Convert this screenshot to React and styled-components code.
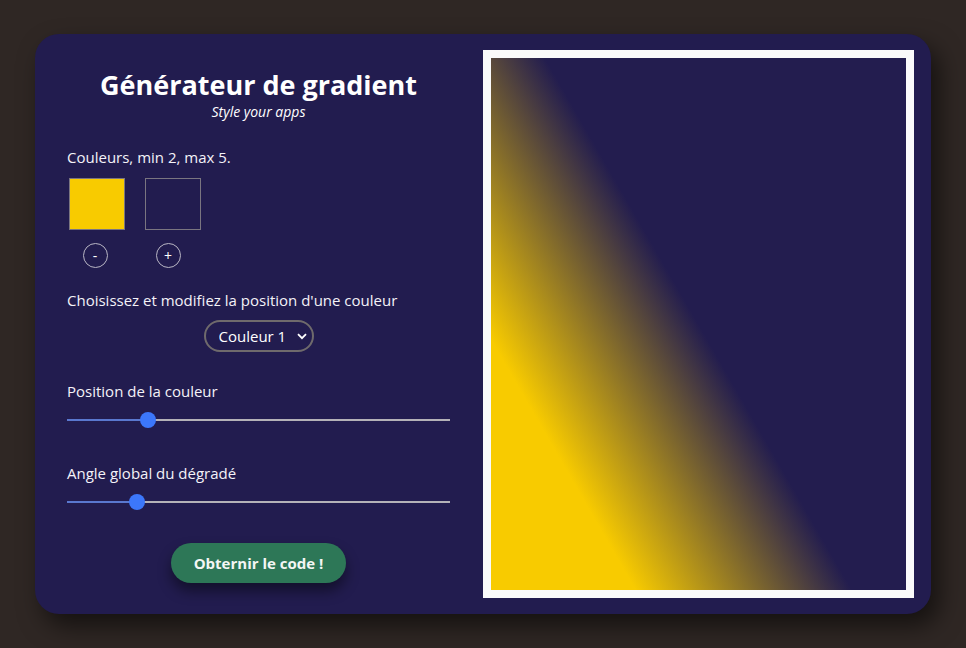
import React, { useState } from "react";
import styled, { createGlobalStyle } from "styled-components";

const Global = createGlobalStyle`
  html, body { margin: 0; padding: 0; }
  body {
    background: #2f2724;
    font-family: "Open Sans", "Noto Sans", sans-serif;
    color: #f4f2f8;
    width: 966px;
    height: 648px;
    overflow: hidden;
  }
`;

const Page = styled.div`
  width: 966px;
  height: 648px;
  display: flex;
  align-items: center;
  justify-content: center;
`;

const Card = styled.div`
  width: 896px;
  height: 580px;
  box-sizing: border-box;
  background: #221c4f;
  border-radius: 24px;
  box-shadow: 8px 12px 24px rgba(0, 0, 0, 0.55);
  display: flex;
  padding: 16px 17px 16px 32px;
  gap: 33px;
`;

const Controls = styled.div`
  width: 383px;
  display: flex;
  flex-direction: column;
  padding-top: 18px;
`;

const Title = styled.h1`
  margin: 0;
  font-size: 27px;
  line-height: 34px;
  font-weight: 700;
  text-align: center;
  color: #ffffff;
`;

const Subtitle = styled.p`
  margin: 1px 0 0;
  font-size: 14px;
  line-height: 18px;
  font-style: italic;
  text-align: center;
  color: #ffffff;
`;

const Label = styled.p`
  margin: ${(p) => p.$top}px 0 0;
  font-size: 15px;
  line-height: 20px;
  color: #f4f2f8;
`;

const Swatches = styled.div`
  display: flex;
  gap: 20px;
  margin-top: 11px;
  padding-left: 2px;
`;

const SwatchCol = styled.div`
  display: flex;
  flex-direction: column;
  align-items: center;
  gap: 13px;
`;

const Swatch = styled.div`
  width: 54px;
  height: 50px;
  border: 1px solid #7a7580;
  background: ${(p) => p.$color};
`;

const Round = styled.button`
  width: 25px;
  height: 25px;
  border-radius: 50%;
  border: 1px solid #b9b6c4;
  background: transparent;
  color: #ffffff;
  font-family: "Open Sans", sans-serif;
  font-size: 14px;
  line-height: 1;
  padding: 0;
  display: flex;
  align-items: center;
  justify-content: center;
  margin-right: ${(p) => p.$shift}px;
`;

const SelectRow = styled.div`
  display: flex;
  justify-content: center;
  margin-top: 10px;
`;

const SelectWrap = styled.div`
  position: relative;
  width: 110px;
  height: 32px;
`;

const Select = styled.select`
  appearance: none;
  width: 100%;
  height: 100%;
  box-sizing: border-box;
  border: 2px solid #6f6a6c;
  border-radius: 16px;
  background: transparent;
  color: #ffffff;
  font-family: "Open Sans", sans-serif;
  font-size: 15px;
  padding: 0 0 0 13px;
  outline: none;
`;

const Chevron = styled.svg`
  position: absolute;
  right: 7px;
  top: 13px;
  pointer-events: none;
`;

const Range = styled.input`
  appearance: none;
  -webkit-appearance: none;
  width: 383px;
  height: 16px;
  margin: 11px 0 0;
  background: transparent;
  &::-webkit-slider-runnable-track {
    height: 2px;
    background: var(--track);
  }
  &::-webkit-slider-thumb {
    -webkit-appearance: none;
    width: 16px;
    height: 16px;
    border-radius: 50%;
    background: #3c77fb;
    border: none;
    margin-top: -7px;
  }
`;

const CtaRow = styled.div`
  display: flex;
  justify-content: center;
  margin-top: 33px;
`;

const Cta = styled.button`
  width: 175px;
  height: 40px;
  border: none;
  border-radius: 20px;
  background: #2d7757;
  color: #f3f6f4;
  font-family: "Open Sans", sans-serif;
  font-weight: 700;
  font-size: 15px;
  box-shadow: 0 8px 14px rgba(0, 0, 0, 0.45);
`;

const Preview = styled.div`
  width: 431px;
  height: 548px;
  box-sizing: border-box;
  border: 8px solid #fafafa;
  background: linear-gradient(60deg, #f8cb00 20%, #231d4f 50%);
`;

function Slider({ value }) {
  const track = `linear-gradient(90deg, #5a78cf ${value}%, #b4b2b8 ${value}%)`;
  return (
    <Range
      type="range"
      min="0"
      max="100"
      defaultValue={value}
      style={{ "--track": track }}
    />
  );
}

export default function App() {
  const [sel, setSel] = useState("1");
  return (
    <>
      <Global />
      <Page>
        <Card>
          <Controls>
            <Title>Générateur de gradient</Title>
            <Subtitle>Style your apps</Subtitle>
            <Label $top={26}>Couleurs, min 2, max 5.</Label>
            <Swatches>
              <SwatchCol>
                <Swatch $color="#f8cb00" />
                <Round $shift={4}>-</Round>
              </SwatchCol>
              <SwatchCol>
                <Swatch $color="#221c4f" />
                <Round $shift={10}>+</Round>
              </SwatchCol>
            </Swatches>
            <Label $top={22}>Choisissez et modifiez la position d'une couleur</Label>
            <SelectRow>
              <SelectWrap>
                <Select value={sel} onChange={(e) => setSel(e.target.value)}>
                  <option value="1">Couleur 1</option>
                  <option value="2">Couleur 2</option>
                </Select>
                <Chevron width="10" height="7" viewBox="0 0 10 7">
                  <path d="M1 1.2 L5 5.2 L9 1.2" fill="none" stroke="#ffffff" strokeWidth="1.8" />
                </Chevron>
              </SelectWrap>
            </SelectRow>
            <Label $top={29}>Position de la couleur</Label>
            <Slider value={20} />
            <Label $top={35}>Angle global du dégradé</Label>
            <Slider value={17} />
            <CtaRow>
              <Cta>Obternir le code !</Cta>
            </CtaRow>
          </Controls>
          <Preview />
        </Card>
      </Page>
    </>
  );
}
